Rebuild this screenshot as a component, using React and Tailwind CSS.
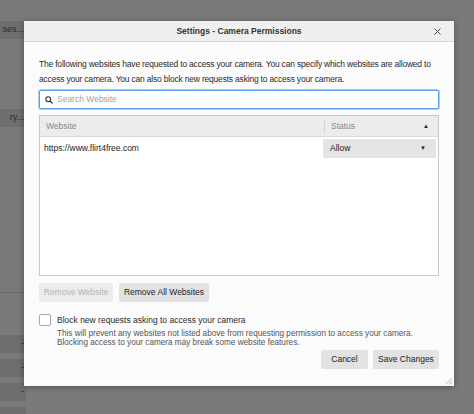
import React from "react";

function BgRow({ label, dark, className = "" }) {
  return (
    <div
      className={`flex h-[18px] items-center justify-end pr-[2px] text-[9px] text-[#2a2a2a] ${
        dark ? "bg-[#6e6e6e]" : ""
      } ${className}`}
    >
      {label}
    </div>
  );
}

function Button({ children, disabled, className = "" }) {
  return (
    <div
      className={`flex h-[19px] items-center justify-center whitespace-nowrap rounded-[2px] text-[8.5px] ${
        disabled ? "bg-[#ececec] text-[#b4b4b4]" : "bg-[#e2e2e2] text-[#222]"
      } ${className}`}
    >
      {children}
    </div>
  );
}

export default function App() {
  return (
    <div
      className="relative h-[414px] w-[474px] overflow-hidden bg-[#7a7a7a]"
      style={{ fontFamily: '"Liberation Sans", Arial, sans-serif' }}
    >
      {/* page behind the dialog */}
      <div className="flex w-[26px] flex-col pt-[21px]">
        <BgRow label="ses..." dark />
        <div className="h-[70px]" />
        <BgRow label="ry..." dark />
        <div className="h-[166px] border-b border-[#6a6a6a]" />
        <div className="h-[42px]" />
        <BgRow label="-" dark className="mb-[6px]" />
        <BgRow label="-" dark className="mb-[6px]" />
        <BgRow label="-" dark className="mb-[6px]" />
        <BgRow label="" dark />
      </div>

      {/* dialog */}
      <div className="absolute left-[24px] top-[21px] flex h-[365px] w-[430px] flex-col bg-[#fbfbfb] shadow-[0_1px_6px_rgba(0,0,0,0.35)]">
        <div className="relative flex h-[21px] shrink-0 items-center justify-center border-b border-[#d6d6d6] bg-[#efefef]">
          <span className="text-[8.5px] font-bold text-[#333]">
            Settings - Camera Permissions
          </span>
          <svg
            className="absolute right-[13px] top-[7px]"
            width="7"
            height="7"
            viewBox="0 0 7 7"
          >
            <path d="M0.5 0.5 L6.5 6.5 M6.5 0.5 L0.5 6.5" stroke="#444" strokeWidth="1" />
          </svg>
        </div>

        <div className="flex flex-1 flex-col px-[15px] pt-[15px]">
          <p className="text-[8.5px] leading-[15px] tracking-[-0.2px] text-[#2c2c2c]">
            The following websites have requested to access your camera. You can specify which websites are allowed to
            access your camera. You can also block new requests asking to access your camera.
          </p>

          <div className="mt-[3px] flex h-[19px] items-center gap-[4px] rounded-[2px] border border-[#5aa0ee] bg-white px-[5px] shadow-[0_0_0_1px_#a9cdf6]">
            <svg width="8" height="8" viewBox="0 0 8 8">
              <circle cx="3.2" cy="3.2" r="2.4" fill="none" stroke="#333" strokeWidth="1.1" />
              <path d="M5 5 L7.5 7.5" stroke="#333" strokeWidth="1.3" />
            </svg>
            <span className="text-[8.5px] text-[#a3a3a3]">Search Website</span>
          </div>

          <div className="mt-[6px] flex h-[161px] flex-col border border-[#c9c9c9] bg-white">
            <div className="flex h-[21px] items-center border-b border-[#dadada] bg-[#ececec] text-[8.5px] text-[#8a8a8a]">
              <div className="flex-1 pl-[6px]">Website</div>
              <div className="flex h-[13px] w-[114px] items-center justify-between border-l border-[#d4d4d4] pl-[6px] pr-[9px]">
                <span>Status</span>
                <span className="text-[6px] text-[#222]">▲</span>
              </div>
            </div>
            <div className="mt-[1px] flex h-[20px] items-center text-[8.5px] text-[#222]">
              <div className="flex-1 pl-[4px]">https://www.flirt4free.com</div>
              <div className="mr-[2px] flex h-[19px] w-[113px] items-center justify-between bg-[#e4e4e4] pl-[7px] pr-[10px]">
                <span>Allow</span>
                <span className="text-[6px]">▼</span>
              </div>
            </div>
          </div>

          <div className="mt-[7px] flex gap-[6px]">
            <Button disabled className="w-[74px]">Remove Website</Button>
            <Button className="w-[90px]">Remove All Websites</Button>
          </div>

          <div className="mt-[12px] flex items-center gap-[6px]">
            <div className="h-[12px] w-[12px] rounded-[2px] border border-[#a8a8a8] bg-white" />
            <span className="text-[8.5px] text-[#2a2a2a]">Block new requests asking to access your camera</span>
          </div>
          <p className="ml-[18px] mt-[2px] text-[8.2px] leading-[9px] text-[#555]">
            This will prevent any websites not listed above from requesting permission to access your camera.
            <br />
            Blocking access to your camera may break some website features.
          </p>

          <div className="mt-[3px] flex justify-end gap-[5px]">
            <Button className="w-[47px]">Cancel</Button>
            <Button className="w-[66px]">Save Changes</Button>
          </div>
        </div>

        <svg className="absolute bottom-[1px] right-[1px]" width="8" height="8" viewBox="0 0 8 8">
          <path d="M7 1 L1 7 M7 4 L4 7 M7 6 L6 7" stroke="#aaa" strokeWidth="0.8" />
        </svg>
      </div>
    </div>
  );
}
